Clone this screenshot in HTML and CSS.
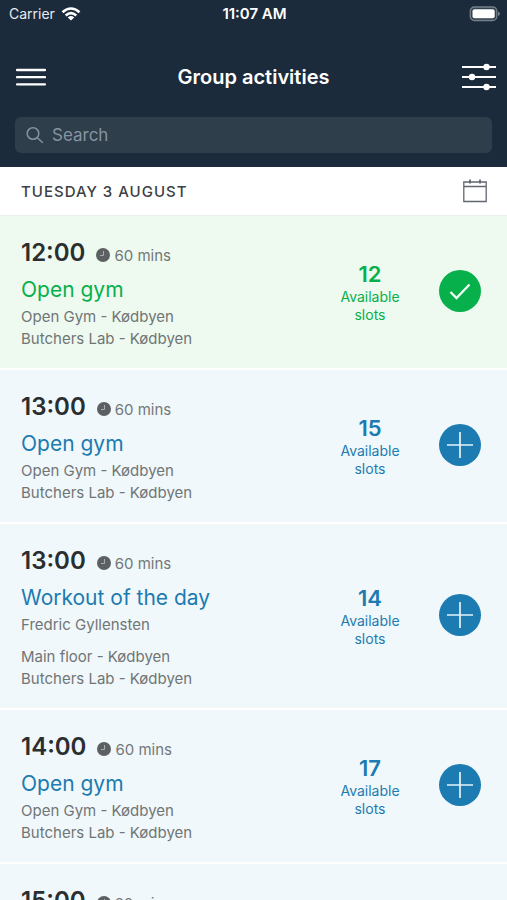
FILE: index.html
```html
<!DOCTYPE html>
<html lang="en">
<head>
<meta charset="utf-8">
<meta name="viewport" content="width=device-width, initial-scale=1">
<title>Group activities</title>
<link rel="stylesheet" href="styles.css">
</head>
<body>
<svg class="sprite" aria-hidden="true">
  <symbol id="clock" viewBox="0 0 14 14"><circle cx="7" cy="7" r="7" fill="#5c6062"/><path d="M7.500 3v4.500H4" fill="none" stroke="#a9afb1"/></symbol>
  <symbol id="plus" viewBox="0 0 42 42"><path d="M21 8v26M8 21h26" fill="none" stroke="#e4f3f9" stroke-width="1.700"/></symbol>
  <symbol id="check" viewBox="0 0 42 42"><path d="M11.500 22l6 6 13-13.500" fill="none" stroke="#f2fff5" stroke-width="2.300"/></symbol>
</svg>
<div class="app">
  <header class="header">
    <div class="status">
      <div class="carrier">Carrier
        <svg width="20" height="14" viewBox="0 0 20 14" aria-hidden="true"><g fill="none" stroke="#fff" stroke-width="2.600"><path d="M1.500 5.200Q10-2.200 18.500 5.200"/><path d="M4.700 8.500Q10 3.900 15.300 8.500"/></g><path d="M6.800 10.400Q10 7.600 13.200 10.400L10 13.600z" fill="#fff"/></svg>
      </div>
      <div class="clock">11:07 AM</div>
      <div class="battery">
        <svg width="31" height="16" viewBox="0 0 31 16" aria-hidden="true"><rect x="1.300" y="1" width="26.500" height="13.500" rx="4" fill="#33414e" stroke="#76818b" stroke-width="1.300"/><rect x="3.500" y="3.200" width="22.200" height="9" rx="2" fill="#fff"/><path d="M29 5.500q2 .8 2 2.300t-2 2.300z" fill="#76818b"/></svg>
      </div>
    </div>
    <div class="nav">
      <button class="icon-button" type="button" aria-label="Menu"><svg width="30" height="20" viewBox="0 0 30 20"><path d="M1 3h28M1 10.200h28M1 17.400h28" stroke="#fff" stroke-width="2.300" stroke-linecap="round"/></svg></button>
      <h1 class="title">Group activities</h1>
      <button class="icon-button" type="button" aria-label="Filters"><svg width="34" height="28" viewBox="0 0 34 28"><path d="M0 4h34M0 14h34M0 24h34" stroke="#fff" stroke-width="2.200"/><g fill="#fff"><circle cx="24.500" cy="4" r="3.200"/><circle cx="10" cy="14" r="3.200"/><circle cx="24.500" cy="24" r="3.200"/></g></svg></button>
    </div>
    <label class="search">
      <svg width="18" height="18" viewBox="0 0 18 18" aria-hidden="true"><g fill="none" stroke="#8793a0" stroke-width="1.500"><circle cx="7" cy="7.500" r="5.800"/><path d="M11.300 11.800l5.500 5"/></g></svg>
      <input class="search-input" type="search" placeholder="Search" aria-label="Search">
    </label>
  </header>
  <div class="date-bar">
    <h2 class="date">TUESDAY 3 AUGUST</h2>
    <button class="icon-button" type="button" aria-label="Choose date"><svg width="24" height="24" viewBox="0 0 24 24" fill="none" stroke="#62666f"><path d="M.8 3h22.400v19.500H.8zM.8 7.500h22.400" stroke-width="1.300"/><path d="M7 .5v4M17 .5v4" stroke-width="1.800"/></svg></button>
  </div>
  <main class="list">
    <article class="activity booked">
      <div class="details">
        <div class="when"><time class="time">12:00</time><svg class="clock-icon"><use href="#clock"/></svg><span class="duration">60 mins</span></div>
        <h3 class="name">Open gym</h3>
        <p class="line">Open Gym - Kødbyen</p>
        <p class="line">Butchers Lab - Kødbyen</p>
      </div>
      <div class="slots"><div class="count">12</div>Available<br>slots</div>
      <button class="action" type="button" aria-label="Booked"><svg class="action-icon"><use href="#check"/></svg></button>
    </article>
    <article class="activity">
      <div class="details">
        <div class="when"><time class="time">13:00</time><svg class="clock-icon"><use href="#clock"/></svg><span class="duration">60 mins</span></div>
        <h3 class="name">Open gym</h3>
        <p class="line">Open Gym - Kødbyen</p>
        <p class="line">Butchers Lab - Kødbyen</p>
      </div>
      <div class="slots"><div class="count">15</div>Available<br>slots</div>
      <button class="action" type="button" aria-label="Book"><svg class="action-icon"><use href="#plus"/></svg></button>
    </article>
    <article class="activity">
      <div class="details">
        <div class="when"><time class="time">13:00</time><svg class="clock-icon"><use href="#clock"/></svg><span class="duration">60 mins</span></div>
        <h3 class="name">Workout of the day</h3>
        <p class="line instructor">Fredric Gyllensten</p>
        <p class="line">Main floor - Kødbyen</p>
        <p class="line">Butchers Lab - Kødbyen</p>
      </div>
      <div class="slots"><div class="count">14</div>Available<br>slots</div>
      <button class="action" type="button" aria-label="Book"><svg class="action-icon"><use href="#plus"/></svg></button>
    </article>
    <article class="activity">
      <div class="details">
        <div class="when"><time class="time">14:00</time><svg class="clock-icon"><use href="#clock"/></svg><span class="duration">60 mins</span></div>
        <h3 class="name">Open gym</h3>
        <p class="line">Open Gym - Kødbyen</p>
        <p class="line">Butchers Lab - Kødbyen</p>
      </div>
      <div class="slots"><div class="count">17</div>Available<br>slots</div>
      <button class="action" type="button" aria-label="Book"><svg class="action-icon"><use href="#plus"/></svg></button>
    </article>
    <article class="activity">
      <div class="details">
        <div class="when"><time class="time">15:00</time><svg class="clock-icon"><use href="#clock"/></svg><span class="duration">60 mins</span></div>
      </div>
    </article>
  </main>
</div>
</body>
</html>
```
FILE: styles.css
```css
* { box-sizing: border-box; }
body {
  margin: 0;
  font-family: Inter, "Liberation Sans", sans-serif;
  background: #fff;
  color: #2b2e30;
}
h1, h2, h3, p { margin: 0; }
button {
  padding: 0;
  border: 0;
  background: none;
  cursor: pointer;
}
svg { display: block; flex: none; }
.sprite { position: absolute; width: 0; height: 0; }

.app {
  display: flex;
  flex-direction: column;
  height: 100vh;
}
.header {
  flex: none;
  padding: 0 15px 14px;
  background: #1b2b3c;
  color: #fff;
}
.status {
  display: grid;
  grid-template-columns: 1fr auto 1fr;
  align-items: center;
  height: 27px;
  margin: 0 -8px 0 -6px;
  font-size: 14px;
}
.carrier { display: flex; align-items: center; gap: 6px; color: #e6eaee; }
.clock { font-weight: 600; font-size: 15px; }
.battery { justify-self: end; }
.nav {
  display: grid;
  grid-template-columns: 1fr auto 1fr;
  align-items: center;
  height: 90px;
  padding: 9px 0 0;
  margin: 0 -4px;
}
.nav .icon-button:first-child { justify-self: start; margin-left: 5px; }
.nav .icon-button:last-child { justify-self: end; }
.title { font-size: 20px; font-weight: 600; line-height: 26px; }
.search {
  display: flex;
  align-items: center;
  gap: 8px;
  height: 36px;
  padding: 0 11px;
  border-radius: 6px;
  background: #2f3e4b;
}
.search-input {
  flex: 1;
  min-width: 0;
  padding: 0;
  border: 0;
  outline: 0;
  background: none;
  color: #fff;
  font: 17px/24px Inter, "Liberation Sans", sans-serif;
}
.search-input::placeholder { color: #8793a0; opacity: 1; }

.date-bar {
  display: flex;
  flex: none;
  align-items: center;
  justify-content: space-between;
  height: 49px;
  padding: 0 20px 0 21px;
  border-bottom: 1px solid #e9f0ea;
}
.date {
  color: #3d4043;
  font-size: 15px;
  font-weight: 500;
  letter-spacing: 1px;
}

.list {
  display: flex;
  flex: 1;
  flex-direction: column;
  gap: 2px;
  min-height: 0;
  overflow-y: auto;
  scrollbar-width: none;
}
.activity {
  --accent: #1c7bb0;
  display: flex;
  flex: none;
  align-items: center;
  padding: 0 26px 2px 21px;
  background: #f0f8fb;
}
.booked {
  --accent: #07b04b;
  background: #eefaf0;
}
.details { flex: 1; padding: 22px 0 16px; }
.when {
  display: flex;
  align-items: center;
  height: 30px;
  margin-bottom: 8px;
}
.time { font-size: 24px; font-weight: 600; line-height: 30px; }
.clock-icon { width: 14px; height: 14px; margin: 4px 4px 0 11px; }
.duration { padding-top: 6px; color: #737778; font-size: 15px; line-height: 20px; }
.name {
  margin-bottom: 2px;
  color: var(--accent);
  font-size: 21px;
  font-weight: 400;
  line-height: 28px;
}
.line { color: #707576; font-size: 15px; line-height: 22px; }
.instructor { margin-bottom: 10px; }
.slots {
  width: 90px;
  margin-right: 24px;
  padding-top: 2px;
  color: var(--accent);
  font-size: 14px;
  line-height: 18px;
  text-align: center;
}
.count { font-size: 22px; font-weight: 600; line-height: 28px; }
.action {
  width: 42px;
  height: 42px;
  border-radius: 50%;
  background: var(--accent);
}
.action-icon { width: 42px; height: 42px; }
```
